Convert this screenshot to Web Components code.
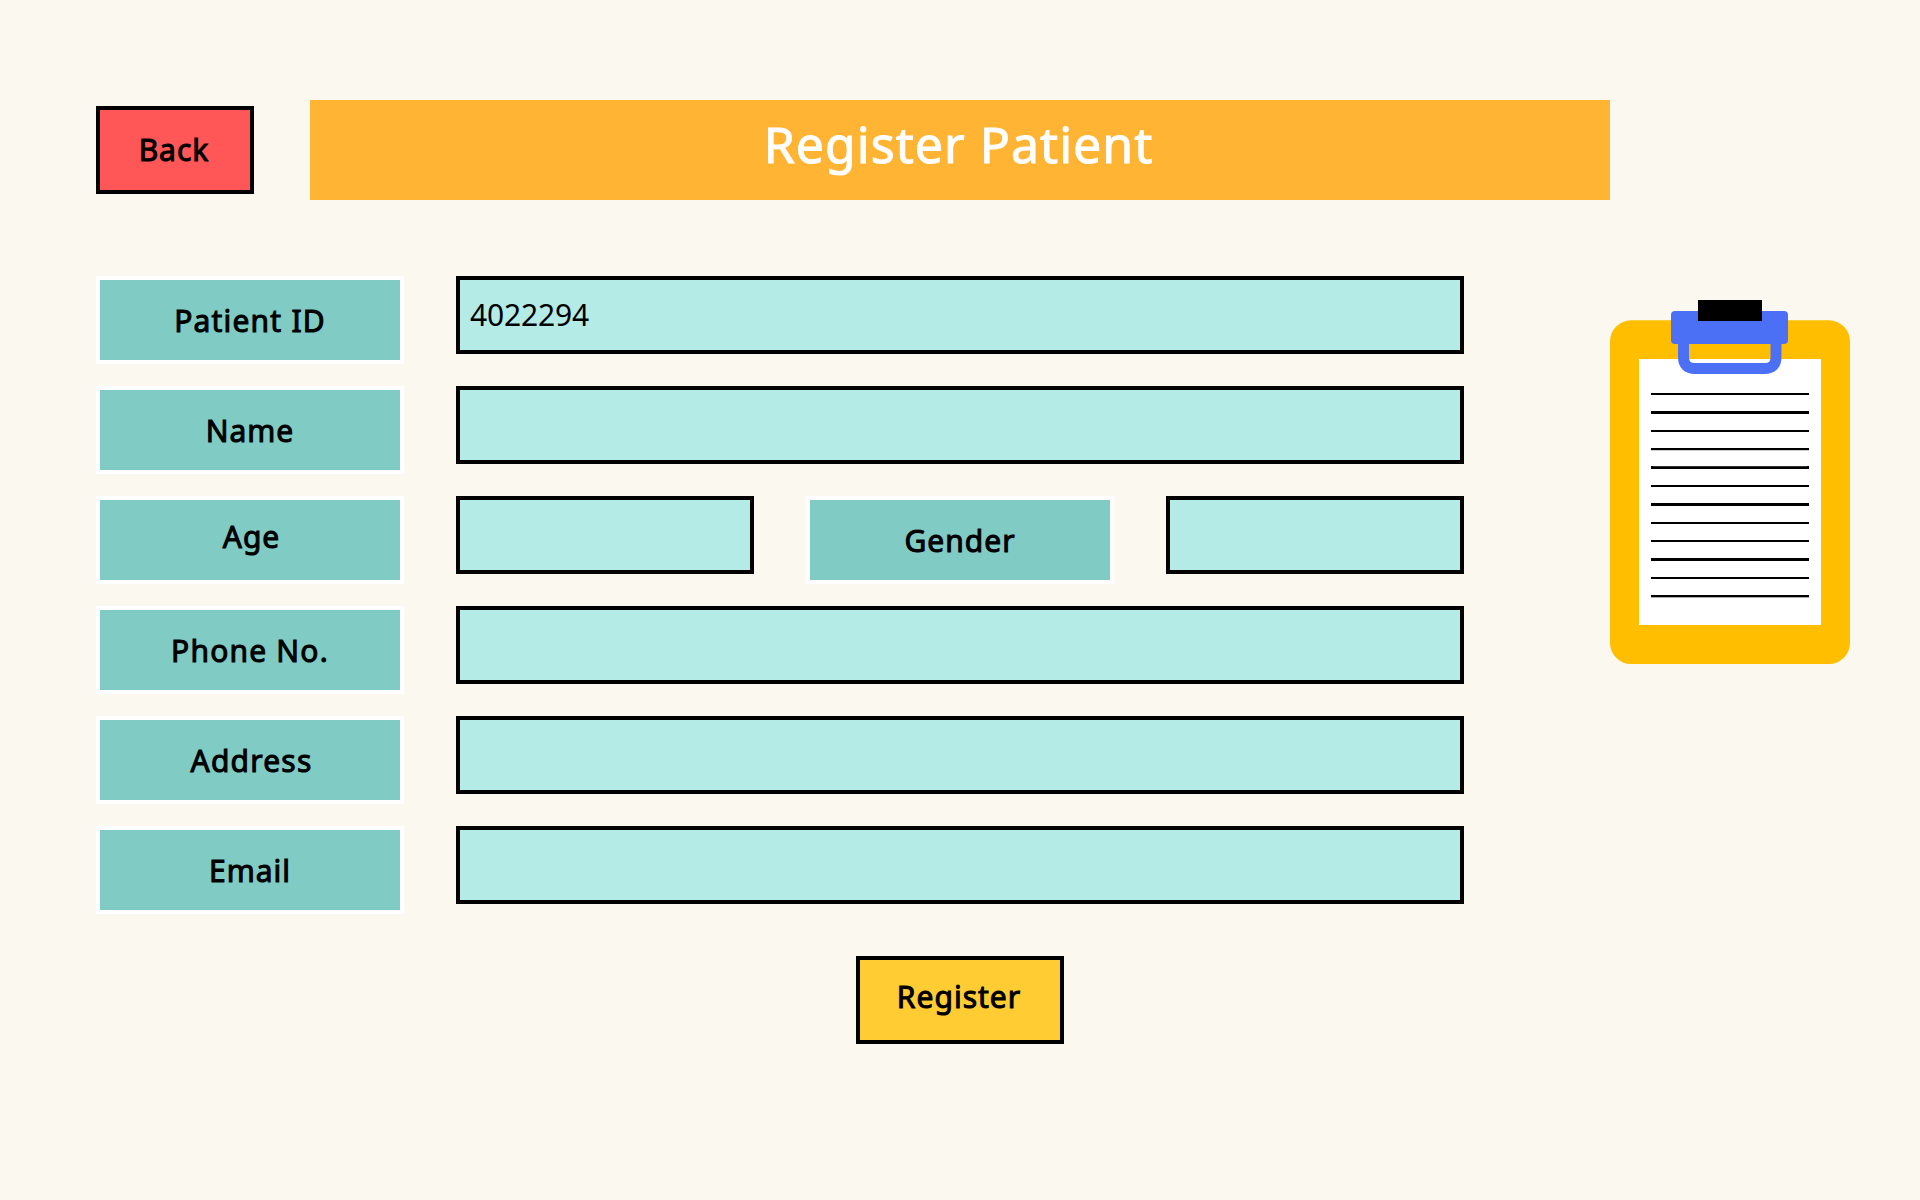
<!DOCTYPE html>
<html lang="en">
<head>
<meta charset="utf-8">
<title>Register Patient</title>
<style>
body { margin: 0; background: #fbf8ef; font-family: "Noto Sans", sans-serif; }
</style>
</head>
<body>
<register-screen></register-screen>
<script>
class BaseElement extends HTMLElement {
  constructor() {
    super();
    this.attachShadow({ mode: 'open' }).innerHTML = this.constructor.markup;
  }
}

class ActionButton extends BaseElement {
  static markup = `
    <style>
      :host { display: block; width: 158px; height: 88px; }
      button { display: flex; align-items: center; justify-content: center; width: 100%; height: 100%;
        box-sizing: border-box; margin: 0; border: 4px solid #000; border-radius: 0;
        padding: 0 2px var(--lift, 0) 0; background: var(--fill, #ff5757); color: #000;
        font: 30px/42px "Noto Sans", sans-serif; letter-spacing: 1px; -webkit-text-stroke: 1px #000; }
      span { white-space: nowrap; }
    </style>
    <button type="button"><span><slot></slot></span></button>`;
}

class TitleBanner extends BaseElement {
  static markup = `
    <style>
      :host { display: flex; align-items: center; justify-content: center; width: 1300px; height: 100px;
        box-sizing: border-box; padding: 0 3px 13px 0; background: #ffb433; color: #fff;
        font: 50px/68px "Noto Sans", sans-serif; letter-spacing: 1.03px; -webkit-text-stroke: 1px #fff; }
    </style>
    <span><slot></slot></span>`;
}

class FieldLabel extends BaseElement {
  static markup = `
    <style>
      :host { display: flex; align-items: center; justify-content: center; width: 308px; height: 88px;
        box-sizing: border-box; border: 4px solid #fff; padding: 1px 0 var(--lift, 0) var(--shift, 0); background: #80cbc4; color: #000;
        font: 30px/42px "Noto Sans", sans-serif; letter-spacing: var(--track, 1px); -webkit-text-stroke: 1px #000; }
    </style>
    <span><slot></slot></span>`;
}

class FieldBox extends BaseElement {
  static markup = `
    <style>
      :host { display: flex; align-items: center; flex: 1; height: 78px; box-sizing: border-box;
        border: 4px solid #000; padding: 0 10px 1px; background: #b4ebe6; color: #000;
        font: 30px/42px "Noto Sans", sans-serif; letter-spacing: -0.15px; }
    </style>
    <span><slot></slot></span>`;
}

class FormRow extends BaseElement {
  static markup = `
    <style>
      :host { display: flex; align-items: flex-start; gap: 52px; height: 88px; }
    </style>
    <slot></slot>`;
}

class ClipboardArt extends BaseElement {
  static markup = `
    <style>:host { display: block; width: 240px; height: 364px; } svg { display: block; }</style>
    <svg width="240" height="364" viewBox="0 0 240 364">
      <rect y="20.3" width="240" height="343.7" rx="21" fill="#ffbf00"/>
      <rect x="29" y="59" width="182" height="266" fill="#fff"/>
      <path d="M73.5 42V57Q73.5 68.5 85 68.5H154.500Q166 68.500 166 57V42" fill="none" stroke="#4b70f5" stroke-width="11"/>
      <rect x="61" y="11" width="117" height="33" rx="4" fill="#4b70f5"/>
      <rect x="88" width="64" height="21"/>
      <g shape-rendering="crispEdges">
        <path d="M41 94h158M41 131h158M41 149h158M41 186h158M41 223h158M41 241h158M41 278h158M41 296h158" stroke="#000" stroke-width="2"/>
        <path d="M41 112.500h158M41 167.500h158M41 204.500h158M41 259.500h158" stroke="#000" stroke-width="3"/>
        <path d="M41 150.500h158" stroke="#ccc"/><path d="M43 166.500h154" stroke="#333"/><path d="M41 297.500h158" stroke="#aaa"/>
      </g>
    </svg>`;
}

class RegisterScreen extends BaseElement {
  static markup = `
    <style>
      :host { display: block; box-sizing: border-box; width: 1920px; height: 1200px; padding: 100px 70px 0 96px; }
      header { display: flex; align-items: center; gap: 56px; }
      main { display: flex; justify-content: space-between; align-items: flex-start; margin-top: 76px; }
      form { display: flex; flex-direction: column; gap: 22px; width: 1368px; }
      clipboard-art { margin-top: 24px; }
      .submit { --fill: #ffcc33; --lift: 6px; width: 208px; margin: 42px 0 0 760px; }
      .age { --lift: 8px; --shift: 3px; }
      .wide { --track: 1.2px; }
      .address { --track: 1.2px; --shift: 3px; }
    </style>
    <header>
      <action-button>Back</action-button>
      <title-banner>Register Patient</title-banner>
    </header>
    <main>
      <form>
        <form-row><field-label class="wide">Patient ID</field-label><field-box>4022294</field-box></form-row>
        <form-row><field-label>Name</field-label><field-box></field-box></form-row>
        <form-row><field-label class="age">Age</field-label><field-box></field-box><field-label>Gender</field-label><field-box></field-box></form-row>
        <form-row><field-label class="wide">Phone No.</field-label><field-box></field-box></form-row>
        <form-row><field-label class="address">Address</field-label><field-box></field-box></form-row>
        <form-row><field-label>Email</field-label><field-box></field-box></form-row>
      </form>
      <clipboard-art></clipboard-art>
    </main>
    <action-button class="submit">Register</action-button>`;
}

customElements.define('action-button', ActionButton);
customElements.define('title-banner', TitleBanner);
customElements.define('field-label', FieldLabel);
customElements.define('field-box', FieldBox);
customElements.define('form-row', FormRow);
customElements.define('clipboard-art', ClipboardArt);
customElements.define('register-screen', RegisterScreen);
</script>
</body>
</html>
